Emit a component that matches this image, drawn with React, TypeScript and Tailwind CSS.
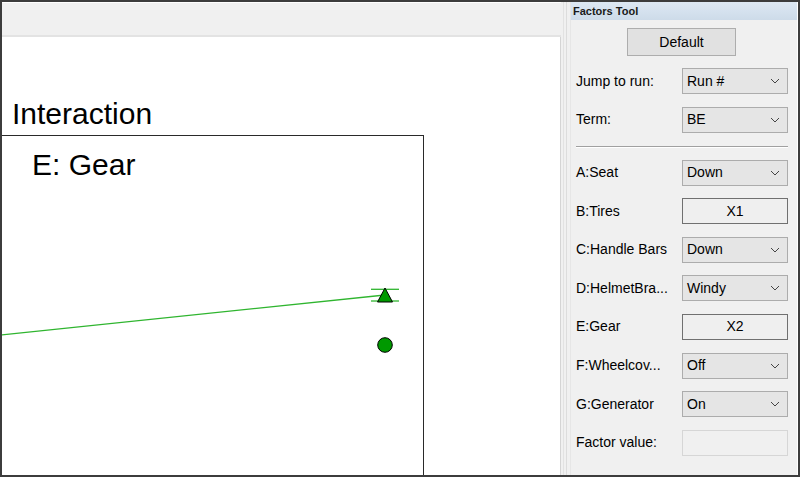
import React from "react";

type Row =
  | { label: string; kind: "select"; value: string }
  | { label: string; kind: "button"; value: string }
  | { label: string; kind: "input"; value: string };

const factorRows: Row[] = [
  { label: "A:Seat", kind: "select", value: "Down" },
  { label: "B:Tires", kind: "button", value: "X1" },
  { label: "C:Handle Bars", kind: "select", value: "Down" },
  { label: "D:HelmetBra...", kind: "select", value: "Windy" },
  { label: "E:Gear", kind: "button", value: "X2" },
  { label: "F:Wheelcov...", kind: "select", value: "Off" },
  { label: "G:Generator", kind: "select", value: "On" },
  { label: "Factor value:", kind: "input", value: "" },
];

function Chevron() {
  return (
    <svg width="10" height="6" viewBox="0 0 10 6" className="shrink-0">
      <polyline points="1,1 5,5 9,1" fill="none" stroke="#444" strokeWidth="1" />
    </svg>
  );
}

function Control({ row }: { row: Row }) {
  if (row.kind === "select") {
    return (
      <div className="w-[106px] h-[26px] flex items-center justify-between pl-[4px] pr-[7px] bg-[#e5e5e5] border border-[#acacac] text-[14px] text-black">
        <span>{row.value}</span>
        <Chevron />
      </div>
    );
  }
  if (row.kind === "button") {
    return (
      <div className="w-[106px] h-[26px] flex items-center justify-center bg-[#efefef] border border-[#707070] text-[14px] text-black">
        {row.value}
      </div>
    );
  }
  return <div className="w-[106px] h-[26px] bg-[#f0f0f0] border border-[#d6d6d6]" />;
}

function FieldRow({ row, first }: { row: Row; first?: boolean }) {
  return (
    <div className={`flex items-center h-[26px] ${first ? "" : "mt-[12.6px]"}`}>
      <span className="w-[106px] text-[14px] text-black whitespace-nowrap">{row.label}</span>
      <Control row={row} />
    </div>
  );
}

function ChartCanvas() {
  return (
    <svg width="421" height="340" className="absolute left-0 top-0">
      <line x1="-2" y1="199" x2="383" y2="159" stroke="#2fb52f" strokeWidth="1.3" />
      <line x1="369" y1="153.3" x2="397" y2="153.3" stroke="#2fb52f" strokeWidth="1.3" />
      <line x1="369" y1="165" x2="397" y2="165" stroke="#2fb52f" strokeWidth="1.3" />
      <polygon points="383,152 375.5,166 390.5,166" fill="#009900" stroke="#000" strokeWidth="1" />
      <circle cx="383" cy="209" r="7.3" fill="#009900" stroke="#000" strokeWidth="1" />
    </svg>
  );
}

export default function App() {
  return (
    <div className="w-[800px] h-[477px] flex border-2 border-[#3c3c3c] bg-[#f0f0f0] font-['Liberation_Sans',Arial,sans-serif] overflow-hidden">
      {/* main plot area */}
      <div className="w-[559px] flex flex-col">
        <div className="h-[35px] bg-[#f0f0f0] border-t border-white border-b-2 border-b-[#e3e3e3]" />
        <div className="flex-1 bg-white border-r border-[#d4d4d4] flex flex-col overflow-hidden">
          <div className="mt-[62px] ml-[10px] text-[30px] leading-none text-black">Interaction</div>
          <div className="relative mt-[6px] w-[422px] flex-1 border-t border-r border-[#2a2a2a]">
            <ChartCanvas />
            <div className="relative mt-[14px] ml-[30px] text-[30px] leading-none text-black">E: Gear</div>
          </div>
        </div>
      </div>

      {/* splitter */}
      <div className="w-[9px] flex">
        <div className="w-[2px] bg-[#f0f0f0]" />
        <div className="w-[1px] bg-[#e2e2e2]" />
        <div className="w-[2px] bg-[#f0f0f0]" />
        <div className="w-[1px] bg-[#dcdcdc]" />
        <div className="flex-1 bg-[#f0f0f0]" />
      </div>

      {/* factors tool panel */}
      <div className="flex-1 flex flex-col border-l border-[#e6e6e6] border-r border-r-white">
        <div className="h-[18px] bg-gradient-to-b from-[#dde8f3] to-[#cddbe9] flex items-center pl-[2px] text-[11px] font-bold text-[#1a1a1a]">
          Factors Tool
        </div>
        <div className="flex flex-col pl-[5px] pr-[9px]">
          <div className="mt-[8px] ml-[51px] w-[109px] h-[28px] flex items-center justify-center bg-[#e1e1e1] border border-[#adadad] text-[14px] text-black">
            Default
          </div>
          <div className="mt-[12px]">
            <FieldRow row={{ label: "Jump to run:", kind: "select", value: "Run #" }} first />
            <FieldRow row={{ label: "Term:", kind: "select", value: "BE" }} />
          </div>
          <div className="mt-[13px] h-[2px] border-t border-[#a0a0a0] border-b border-b-white" />
          <div className="mt-[12px]">
            {factorRows.map((r, i) => (
              <FieldRow key={r.label} row={r} first={i === 0} />
            ))}
          </div>
        </div>
      </div>
    </div>
  );
}
